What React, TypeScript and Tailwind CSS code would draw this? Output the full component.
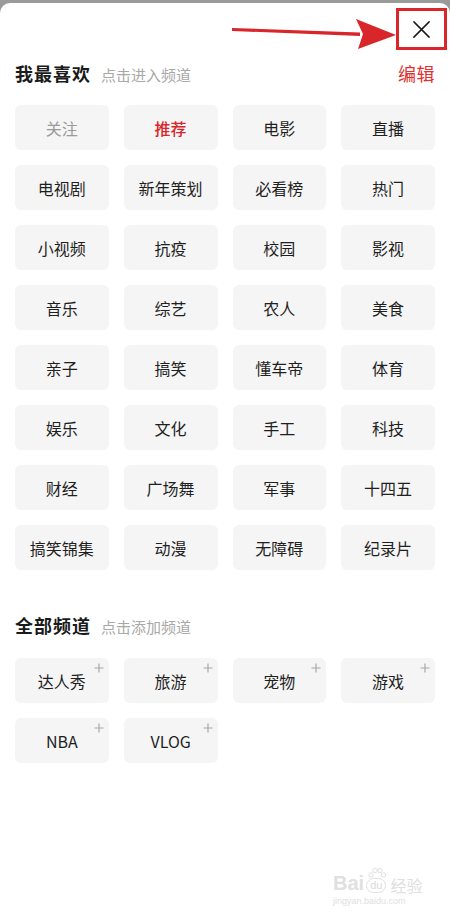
import React from "react";

const fav = [
  "关注", "推荐", "电影", "直播",
  "电视剧", "新年策划", "必看榜", "热门",
  "小视频", "抗疫", "校园", "影视",
  "音乐", "综艺", "农人", "美食",
  "亲子", "搞笑", "懂车帝", "体育",
  "娱乐", "文化", "手工", "科技",
  "财经", "广场舞", "军事", "十四五",
  "搞笑锦集", "动漫", "无障碍", "纪录片",
];

const all = ["达人秀", "旅游", "宠物", "游戏", "NBA", "VLOG"];

const font = { fontFamily: '"Noto Sans CJK SC", "Noto Sans", sans-serif' };

export default function App() {
  return (
    <div className="w-[450px] h-[920px] bg-[#9a9a9a] overflow-hidden" style={font}>
      <div className="relative mt-[3px] h-[917px] bg-white rounded-t-[10px]">
        {/* close row */}
        <div className="h-[50px] flex justify-end items-start pr-[3px] pt-[5px]">
          <div className="w-[51px] h-[42px] border-[3px] border-[#d9262b] flex items-center justify-center">
            <svg width="19" height="19" viewBox="0 0 20 20">
              <path d="M2 2 L18 18 M18 2 L2 18" stroke="#1a1a1a" strokeWidth="1.6" strokeLinecap="round" />
            </svg>
          </div>
        </div>
        {/* annotation arrow */}
        <svg className="absolute left-[230px] top-[12px]" width="168" height="36" viewBox="0 0 168 36">
          <path d="M2 13 L130 17.5 L130 21 L2 16 Z" fill="#d9262b" />
          <path d="M126 4 L166 20 L128 34 L133 19 Z" fill="#d9262b" />
        </svg>

        {/* 我最喜欢 header */}
        <div className="flex items-center justify-between px-[15px] h-[40px]">
          <div className="flex items-baseline gap-[10px]">
            <span className="text-[18px] font-bold text-[#1a1a1a] tracking-[1px]">我最喜欢</span>
            <span className="text-[15px] text-[#a8a8a8]">点击进入频道</span>
          </div>
          <span className="text-[18px] text-[#e0302f] tracking-[0.5px]">编辑</span>
        </div>

        <div className="grid grid-cols-4 gap-x-[15px] gap-y-[15px] px-[15px] mt-[12px]">
          {fav.map((t) => (
            <div
              key={t}
              className={
                "h-[45px] rounded-[6px] bg-[#f5f5f5] flex items-center justify-center text-[16px] " +
                (t === "关注" ? "text-[#9a9a9a]" : t === "推荐" ? "text-[#d9262b] font-medium" : "text-[#1f1f1f]")
              }
            >
              {t}
            </div>
          ))}
        </div>

        {/* 全部频道 */}
        <div className="flex items-baseline gap-[10px] px-[15px] mt-[42px] h-[26px]">
          <span className="text-[18px] font-bold text-[#1a1a1a] tracking-[1px]">全部频道</span>
          <span className="text-[15px] text-[#a8a8a8]">点击添加频道</span>
        </div>

        <div className="grid grid-cols-4 gap-x-[15px] gap-y-[15px] px-[15px] mt-[20px]">
          {all.map((t) => (
            <div
              key={t}
              className="relative h-[45px] rounded-[6px] bg-[#f5f5f5] flex items-center justify-center text-[16px] text-[#1f1f1f]"
            >
              {t}
              <svg className="absolute right-[5px] top-[5px]" width="10" height="10" viewBox="0 0 10 10">
                <path d="M5 0.5 V9.5 M0.5 5 H9.5" stroke="#a8a8a8" strokeWidth="1.2" />
              </svg>
            </div>
          ))}
        </div>

        {/* watermark */}
        <div className="absolute left-[333px] top-[870px] flex flex-col items-start text-[#e0e0e0]" style={{ fontFamily: '"Liberation Sans", sans-serif' }}>
          <div className="flex items-end">
            <span className="text-[20px] leading-none font-bold">Bai</span>
            <span className="relative mx-[2px] text-[11px] leading-none border border-[#e0e0e0] rounded-full px-[3px] py-[1px] text-[#dadada]">
              du
              <svg className="absolute -top-[12px] left-[1px]" width="18" height="12" viewBox="0 0 18 12">
                <circle cx="3" cy="8" r="2.2" fill="none" stroke="#e0e0e0" />
                <circle cx="7" cy="3.5" r="2.2" fill="none" stroke="#e0e0e0" />
                <circle cx="12" cy="3.5" r="2.2" fill="none" stroke="#e0e0e0" />
                <circle cx="15.5" cy="8" r="2.2" fill="none" stroke="#e0e0e0" />
              </svg>
            </span>
            <span className="text-[16px] leading-none ml-[2px]" style={font}>经验</span>
          </div>
          <span className="text-[9px] leading-none mt-[4px]">jingyan.baidu.com</span>
        </div>
      </div>
    </div>
  );
}
